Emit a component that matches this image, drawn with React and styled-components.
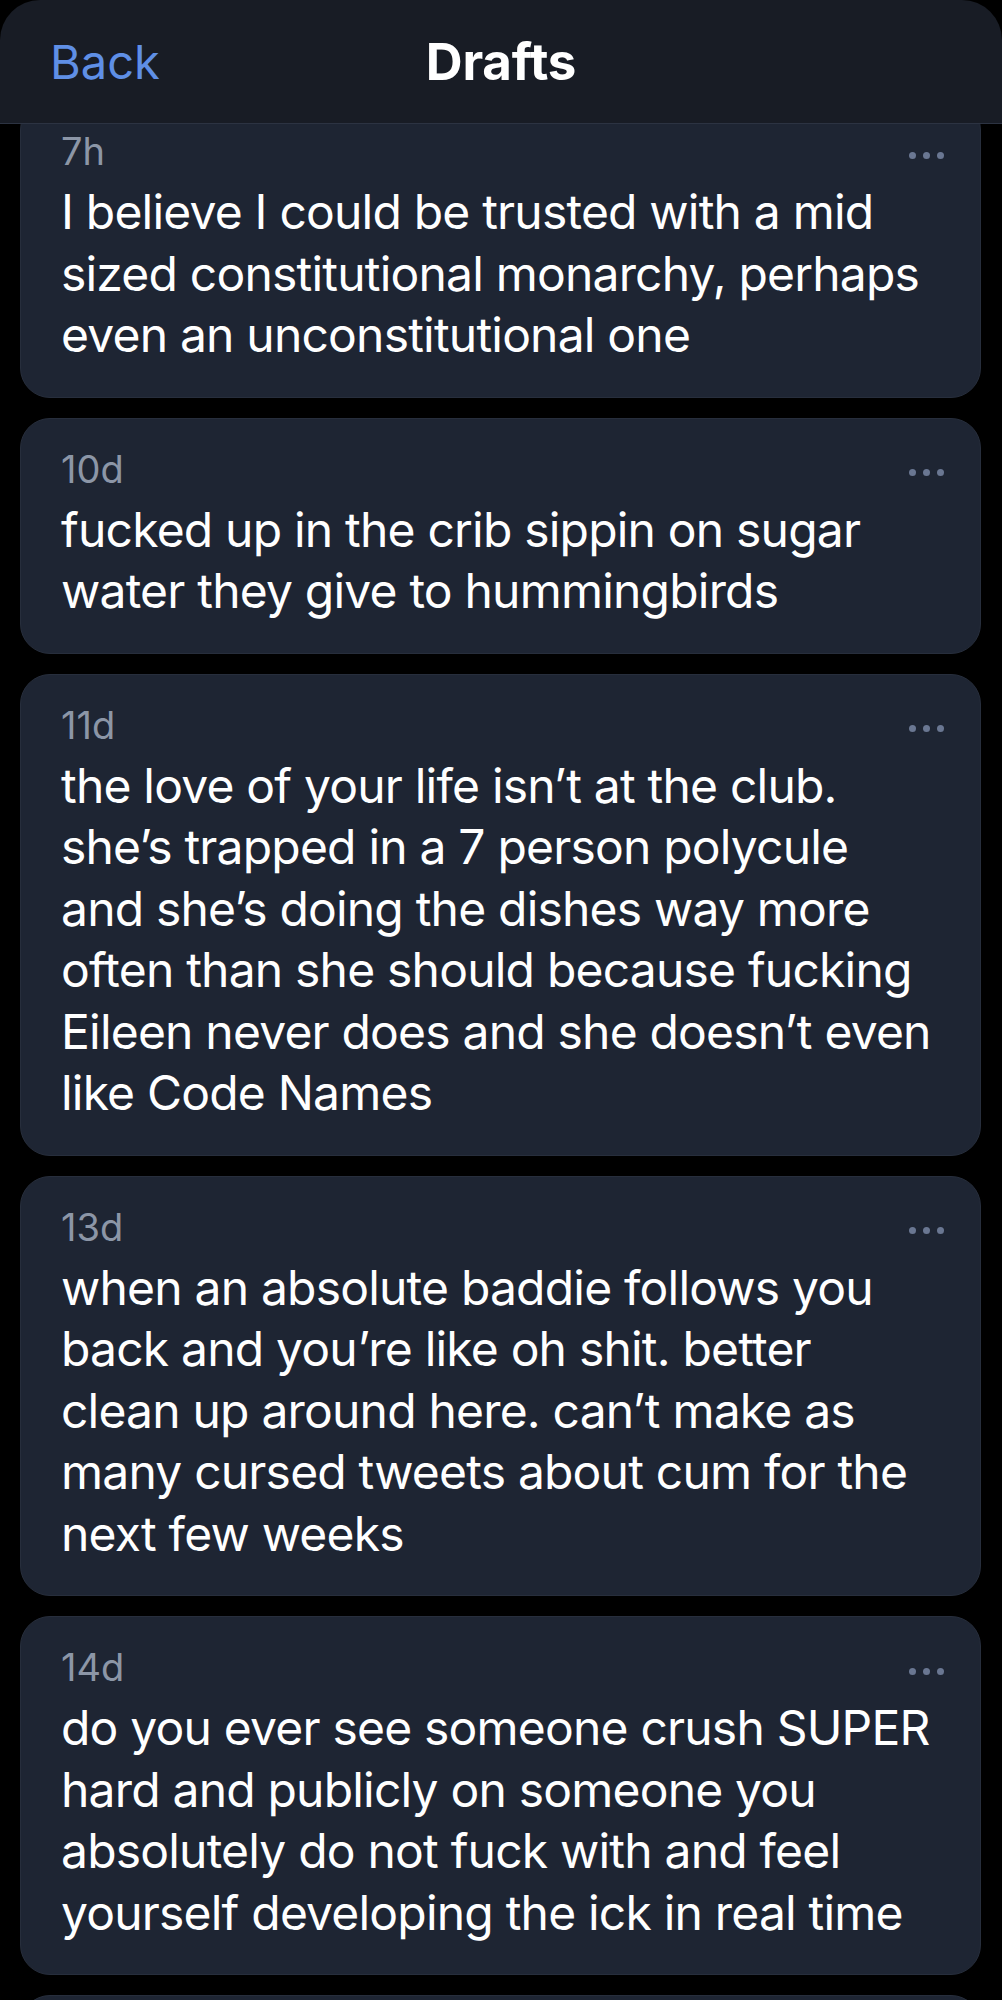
import React from 'react';
import styled, { createGlobalStyle } from 'styled-components';

const GlobalStyle = createGlobalStyle`
  html, body {
    margin: 0;
    padding: 0;
    background: #000;
    overflow: hidden;
  }
  body {
    font-family: Inter, "Noto Sans", "Liberation Sans", sans-serif;
    -webkit-font-smoothing: antialiased;
  }
`;

const Screen = styled.div`
  width: 1002px;
  height: 2000px;
  overflow: hidden;
  background: #000;
`;

const Header = styled.header`
  position: relative;
  z-index: 2;
  height: 123px;
  display: grid;
  grid-template-columns: 1fr auto 1fr;
  align-items: center;
  padding: 0 50px;
  background: #181c25;
  border-bottom: 1px solid #2c3342;
  border-radius: 40px 40px 0 0;
`;

const BackButton = styled.button`
  justify-self: start;
  background: none;
  border: 0;
  padding: 0;
  font-family: inherit;
  font-size: 47px;
  line-height: 1;
  color: #5f8fe6;
  cursor: pointer;
`;

const Title = styled.h1`
  margin: 0;
  font-size: 51px;
  font-weight: 700;
  line-height: 1;
  color: #fff;
  letter-spacing: -0.2px;
`;

// list sits scrolled a little, so the first card slides under the header
const List = styled.main`
  position: relative;
  z-index: 1;
  margin-top: -24px;
  display: flex;
  flex-direction: column;
  gap: 20px;
  padding: 0 21px 0 20px;
`;

const Card = styled.article`
  background: #1e2533;
  border: 1px solid #272e3c;
  border-radius: 30px;
  padding: 29px 40px 31px 40px;
`;

const MetaRow = styled.div`
  display: flex;
  justify-content: space-between;
  align-items: center;
  height: 43px;
  margin-bottom: 8px;
`;

const Stamp = styled.span`
  font-size: 38px;
  line-height: 43px;
  color: #8c96a7;
`;

const Dots = styled.div`
  display: flex;
  gap: 7px;
  margin-right: -4px;
  padding-top: 7px;

  span {
    width: 7px;
    height: 7px;
    border-radius: 50%;
    background: #6a7792;
  }
`;

const Body = styled.p`
  margin: 0;
  font-size: 48px;
  line-height: 61.5px;
  color: #fff;
  white-space: pre;
  letter-spacing: -0.8px;
`;

const drafts = [
  {
    age: '7h',
    lines: [
      'I believe I could be trusted with a mid',
      'sized constitutional monarchy, perhaps',
      'even an unconstitutional one',
    ],
  },
  {
    age: '10d',
    lines: ['fucked up in the crib sippin on sugar', 'water they give to hummingbirds'],
  },
  {
    age: '11d',
    lines: [
      'the love of your life isn\u2019t at the club.',
      'she\u2019s trapped in a 7 person polycule',
      'and she\u2019s doing the dishes way more',
      'often than she should because fucking',
      'Eileen never does and she doesn\u2019t even',
      'like Code Names',
    ],
  },
  {
    age: '13d',
    lines: [
      'when an absolute baddie follows you',
      'back and you\u2019re like oh shit. better',
      'clean up around here. can\u2019t make as',
      'many cursed tweets about cum for the',
      'next few weeks',
    ],
  },
  {
    age: '14d',
    lines: [
      'do you ever see someone crush SUPER',
      'hard and publicly on someone you',
      'absolutely do not fuck with and feel',
      'yourself developing the ick in real time',
    ],
  },
  {
    age: '15d',
    lines: ['just a little guy out here', 'doing little guy things'],
  },
];

const DraftCard = ({ age, lines }) => (
  <Card>
    <MetaRow>
      <Stamp>{age}</Stamp>
      <Dots aria-label="More">
        <span />
        <span />
        <span />
      </Dots>
    </MetaRow>
    <Body>{lines.join('\n')}</Body>
  </Card>
);

export default function App() {
  return (
    <Screen>
      <GlobalStyle />
      <Header>
        <BackButton>Back</BackButton>
        <Title>Drafts</Title>
        <span />
      </Header>
      <List>
        {drafts.map((d) => (
          <DraftCard key={d.age} {...d} />
        ))}
      </List>
    </Screen>
  );
}
